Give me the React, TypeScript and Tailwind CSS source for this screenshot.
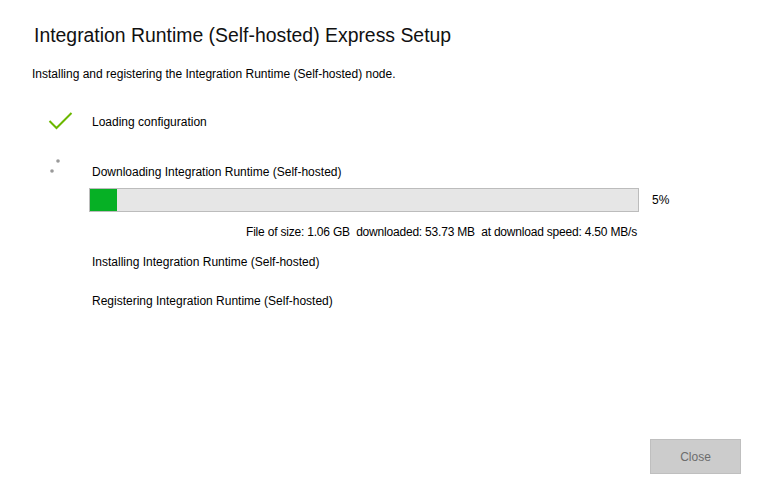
// Integration Runtime express setup: progress dialog
const FONT = "font-['Segoe_UI','Liberation_Sans',sans-serif]"

function Check() {
  return (
    <svg width="26" height="20" viewBox="0 0 26 20" className="block">
      <path d="M1.5 9 L8.5 16 L23.5 1" fill="none" stroke="#6bb700" strokeWidth="2" />
    </svg>
  )
}

function Spinner() {
  return (
    <svg width="12" height="26" viewBox="0 0 12 26" className="block">
      <circle cx="8" cy="2" r="1.8" fill="#9a9a9a" />
      <circle cx="2" cy="12" r="1.8" fill="#9a9a9a" />
    </svg>
  )
}

export default function App() {
  const pct = 5
  return (
    <div className={`${FONT} relative h-[488px] w-[779px] overflow-hidden bg-white text-[12px] text-black`}>
      <h1 className="pl-[34px] pt-[22px] text-[19.4px] leading-[26px] text-[#111]">
        Integration Runtime (Self-hosted) Express Setup
      </h1>
      <p className="pl-[32px] pt-[18px] leading-[16px]">
        Installing and registering the Integration Runtime (Self-hosted) node.
      </p>

      <div className="mt-[30px] flex h-[20px] items-center">
        <div className="w-[92px] pl-[48px]">
          <Check />
        </div>
        <span className="leading-[16px]">Loading configuration</span>
      </div>

      <div className="mt-[32px] flex h-[16px] items-center">
        <div className="w-[92px] pl-[50px]">
          <Spinner />
        </div>
        <span className="leading-[16px]">Downloading Integration Runtime (Self-hosted)</span>
      </div>

      <div className="mt-[8px] flex items-center pl-[89px]">
        <div className="h-[24px] w-[550px] border border-[#bcbcbc] bg-[#e6e6e6]">
          <div className="h-full bg-[#06b025]" style={{ width: `${pct}%` }} />
        </div>
        <span className="pl-[13px]">{pct}%</span>
      </div>

      <div className="mt-[12px] w-[637px] text-right leading-[16px] tracking-[-0.2px]">
        File of size: 1.06 GB&nbsp; downloaded: 53.73 MB&nbsp; at download speed: 4.50 MB/s
      </div>

      <div className="mt-[14px] pl-[92px] leading-[16px]">Installing Integration Runtime (Self-hosted)</div>
      <div className="mt-[23px] pl-[92px] leading-[16px]">Registering Integration Runtime (Self-hosted)</div>

      <button
        disabled
        className="absolute left-[650px] top-[439px] h-[35px] w-[91px] border border-[#bfbfbf] bg-[#cccccc] text-[12px] text-[#6d6d6d]"
      >
        Close
      </button>
    </div>
  )
}
